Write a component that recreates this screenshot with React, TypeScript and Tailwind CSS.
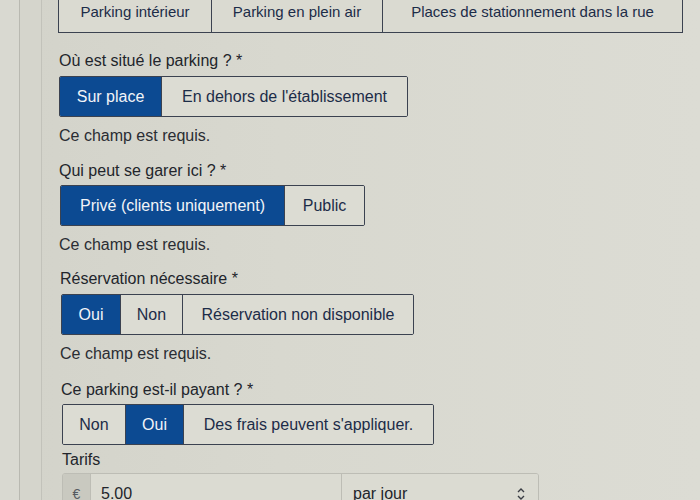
import React from 'react';

type Option = { label: string; width: number; selected?: boolean };

const font = { fontFamily: '"Liberation Sans", Arial, sans-serif' };

const Segmented: React.FC<{ options: Option[] }> = ({ options }) => (
  <div className="flex w-fit border border-[#3b4250] rounded-[2px] overflow-hidden">
    {options.map((o, i) => (
      <div
        key={o.label}
        style={{ width: o.width }}
        className={
          'h-[39px] flex items-center justify-center text-[16px] whitespace-nowrap ' +
          (i > 0 ? 'border-l border-[#3b4250] ' : '') +
          (o.selected ? 'bg-[#0c4a92] text-[#f2f4f8]' : 'bg-[#dcdcd3] text-[#1c2c48]')
        }
      >
        {o.label}
      </div>
    ))}
  </div>
);

const Label: React.FC<{ children: React.ReactNode }> = ({ children }) => (
  <p className="text-[16px] leading-[20px] text-[#22252b]">{children}</p>
);

const Required = () => (
  <p className="text-[16px] leading-[20px] text-[#2a2d33] mt-[9px]">Ce champ est requis.</p>
);

export default function App() {
  return (
    <div
      style={font}
      className="w-[700px] h-[500px] overflow-hidden flex bg-[linear-gradient(90deg,#d3d3ca_0%,#d8d8cf_40%,#dcdcd4_100%)]"
    >
      {/* left gutter */}
      <div className="w-[20px] shrink-0 bg-[#d9d9d1] border-r border-[#b9b9b1]" />
      <div className="w-[22px] shrink-0 bg-[#d5d5cc] border-r border-[#c2c2ba]" />

      <div className="flex flex-col pl-[16px]">
        {/* top tabs */}
        <div className="flex w-fit -mt-[8px] border border-[#3b4250]">
          {[
            { label: 'Parking intérieur', width: 152 },
            { label: 'Parking en plein air', width: 171 },
            { label: 'Places de stationnement dans la rue', width: 300 },
          ].map((t, i) => (
            <div
              key={t.label}
              style={{ width: t.width }}
              className={
                'h-[39px] flex items-center justify-center text-[15px] text-[#1c2c48] bg-[#dadad1] whitespace-nowrap ' +
                (i > 0 ? 'border-l border-[#3b4250]' : '')
              }
            >
              {t.label}
            </div>
          ))}
        </div>

        <div className="mt-[18px] flex flex-col pl-[1px]">
          <Label>Où est situé le parking ? *</Label>
          <div className="mt-[5px]">
            <Segmented
              options={[
                { label: 'Sur place', width: 101, selected: true },
                { label: "En dehors de l'établissement", width: 246 },
              ]}
            />
          </div>
          <Required />

          <div className="mt-[15px]">
            <Label>Qui peut se garer ici ? *</Label>
          </div>
          <div className="mt-[4px] ml-[1px]">
            <Segmented
              options={[
                { label: 'Privé (clients uniquement)', width: 223, selected: true },
                { label: 'Public', width: 80 },
              ]}
            />
          </div>
          <Required />

          <div className="mt-[14px] ml-[1px]">
            <Label>Réservation nécessaire *</Label>
          </div>
          <div className="mt-[5px] ml-[2px]">
            <Segmented
              options={[
                { label: 'Oui', width: 58, selected: true },
                { label: 'Non', width: 62 },
                { label: 'Réservation non disponible', width: 231 },
              ]}
            />
          </div>
          <div className="ml-[1px]">
            <Required />
          </div>

          <div className="mt-[16px] ml-[2px]">
            <Label>Ce parking est-il payant ? *</Label>
          </div>
          <div className="mt-[4px] ml-[3px]">
            <Segmented
              options={[
                { label: 'Non', width: 62 },
                { label: 'Oui', width: 58, selected: true },
                { label: "Des frais peuvent s'appliquer.", width: 250 },
              ]}
            />
          </div>

          <div className="mt-[5px] ml-[3px]">
            <Label>Tarifs</Label>
          </div>

          {/* price row */}
          <div className="mt-[3px] ml-[3px] flex w-fit h-[42px] border border-[#bdbdb5] rounded-[3px] overflow-hidden">
            <div className="w-[28px] flex items-center justify-center bg-[#c9c9c0] text-[14px] text-[#555a60] border-r border-[#bdbdb5]">
              €
            </div>
            <div className="w-[250px] flex items-center pl-[10px] bg-[#dbdbd2] text-[16px] text-[#22252b]">
              5.00
            </div>
            <div className="w-[197px] flex items-center justify-between pl-[11px] pr-[12px] bg-[#dbdbd2] text-[16px] text-[#22252b] border-l border-[#bdbdb5]">
              <span>par jour</span>
              <svg width="10" height="14" viewBox="0 0 10 14" fill="none" stroke="#3a3d44" strokeWidth="1.4">
                <path d="M2 5 L5 2 L8 5" />
                <path d="M2 9 L5 12 L8 9" />
              </svg>
            </div>
          </div>
        </div>
      </div>
    </div>
  );
}
